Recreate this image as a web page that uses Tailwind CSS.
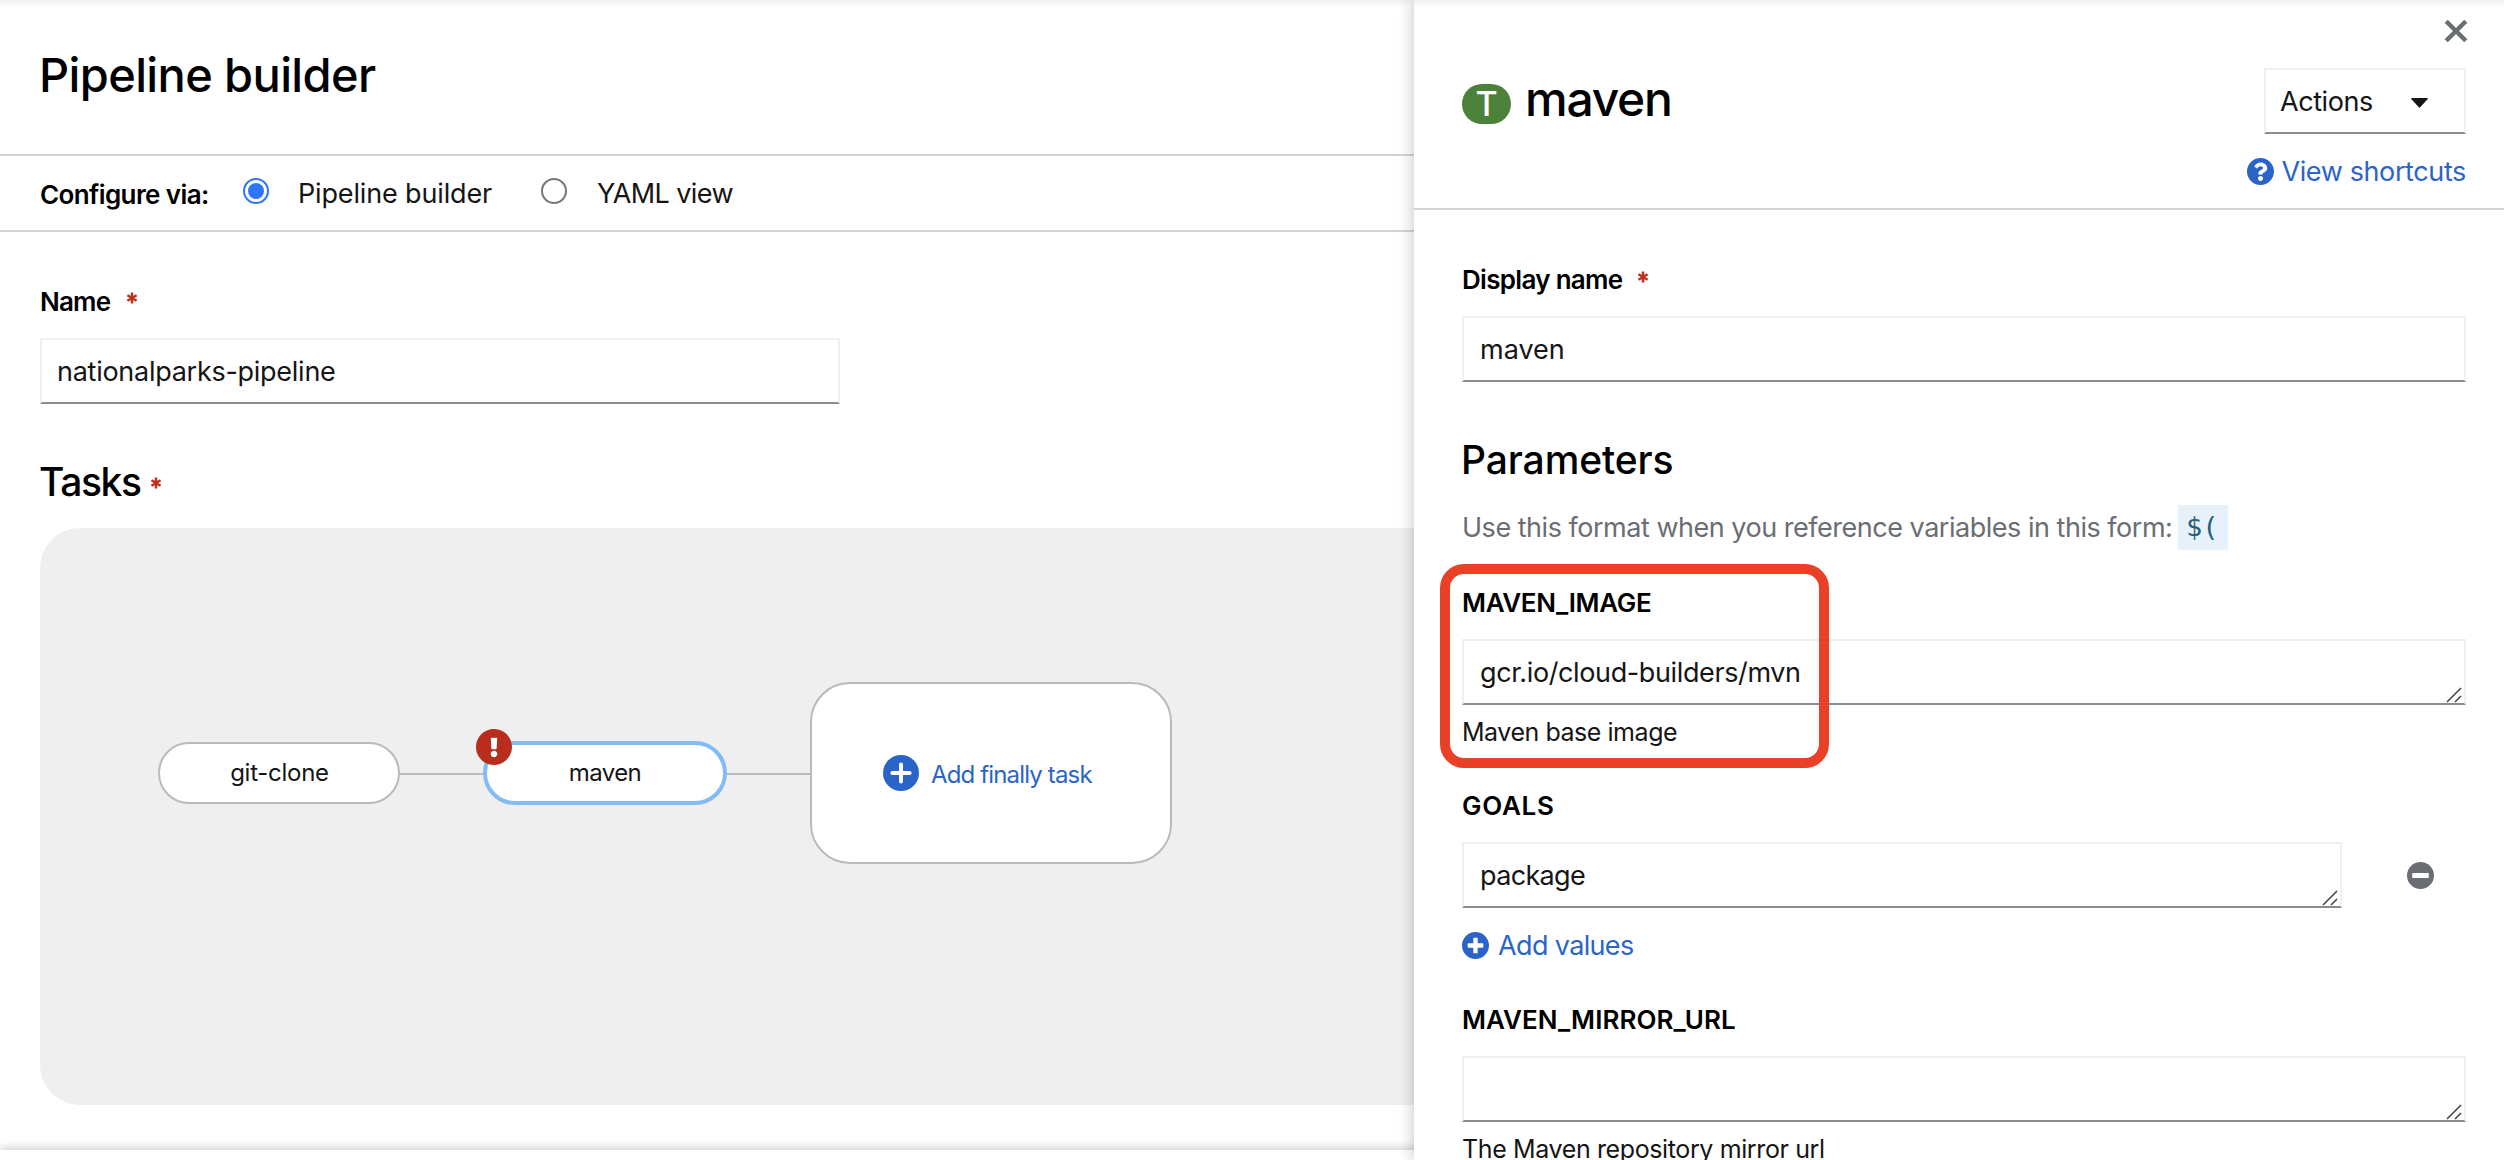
<!DOCTYPE html>
<html lang="en">
<head>
<meta charset="utf-8">
<title>Pipeline builder</title>
<script src="https://cdn.jsdelivr.net/npm/@tailwindcss/browser@4"></script>
</head>
<body class="relative h-[1160px] w-[2504px] overflow-hidden bg-white font-['Inter','Liberation_Sans',sans-serif] text-[27px] text-[#151515]">
<svg class="hidden">
  <symbol id="plus" viewBox="8 8 496 496"><path d="M256 8C119 8 8 119 8 256s111 248 248 248 248-111 248-248S393 8 256 8zm144 276c0 6.6-5.4 12-12 12h-92v92c0 6.6-5.4 12-12 12h-56c-6.6 0-12-5.4-12-12v-92h-92c-6.6 0-12-5.4-12-12v-56c0-6.6 5.4-12 12-12h92v-92c0-6.6 5.4-12 12-12h56c6.6 0 12 5.4 12 12v92h92c6.6 0 12 5.4 12 12v56z"/></symbol>
  <symbol id="grip" viewBox="0 0 16 16"><path d="M1 15L15 1M9 15l6-6" fill="none" stroke="#4a4a4a" stroke-width="1.6"/></symbol>
  <symbol id="star" viewBox="0 0 12 12"><path d="M6 .4v11.2M1.4 3.2l9.2 5.6M10.6 3.2L1.4 8.8" fill="none" stroke="#c02f1d" stroke-width="2.5"/></symbol>
</svg>

<!-- Builder page -->
<main class="flex h-full w-full flex-col">
  <header class="h-[156px] border-b-2 border-[#d2d2d2] pl-[39px] pt-[45px]">
    <h1 class="text-[47px] leading-[60px] font-medium tracking-[-0.63px] text-black">Pipeline builder</h1>
  </header>
  <div class="flex h-[76px] items-center border-b-2 border-[#d2d2d2] pl-10 whitespace-nowrap">
    <span class="w-[203px] pt-0.5 text-[26px] font-semibold tracking-[-0.6px] text-black">Configure via:</span>
    <span class="mb-1 flex size-[26px] items-center justify-center rounded-full border-2 border-[#2f74f5]"><span class="size-4 rounded-full bg-[#2f74f5]"></span></span>
    <span class="ml-[29px] w-[243px] pt-0.5 tracking-[-0.15px]">Pipeline builder</span>
    <span class="mb-1 size-[26px] rounded-full border-2 border-[#767676]"></span>
    <span class="ml-[30px] pt-0.5 tracking-[-0.6px]">YAML view</span>
  </div>
  <section class="flex grow flex-col pl-10">
    <label class="mt-[49px] flex h-[41px] items-center text-[26px] font-semibold tracking-[-0.8px] text-black"><span class="w-[86px]">Name</span><svg class="mb-[7px] size-3"><use href="#star"/></svg></label>
    <div class="mt-4 flex h-[66px] w-[800px] items-center border-2 border-[#f0f0f0] border-b-[#8a8d90] pt-0.5 pl-[15px] tracking-[-0.27px]">nationalparks-pipeline</div>
    <h2 class="mt-[54px] flex h-12 items-center text-[39px] font-medium tracking-[-1.39px] text-black"><span class="-ml-px w-[111px]">Tasks</span><svg class="mt-0.5 size-3"><use href="#star"/></svg></h2>
    <!-- Task graph -->
    <div class="relative mt-[22px] h-[577px] w-[1460px] rounded-[40px] bg-[#efefef] text-2xl">
      <div class="absolute left-[358px] top-[245px] h-0.5 w-[86px] bg-[#b8bbbe]"></div>
      <div class="absolute left-[684px] top-[245px] h-0.5 w-[88px] bg-[#b8bbbe]"></div>
      <div class="absolute left-[118px] top-[214px] flex h-[62px] w-[242px] items-center justify-center rounded-[31px] border-2 border-[#b8bbbe] bg-white pl-px tracking-[-0.26px]">git-clone</div>
      <div class="absolute left-[443px] top-[213px] flex h-16 w-[244px] items-center justify-center rounded-[32px] border-4 border-[#84bbf4] bg-white tracking-[-0.6px]">maven</div>
      <svg class="absolute left-[436px] top-[201px] size-9" viewBox="8 8 496 496"><circle cx="256" cy="256" r="190" fill="#fff"/><path fill="#b92d1d" d="M504 256c0 136.997-111.043 248-248 248S8 392.997 8 256C8 119.083 119.043 8 256 8s248 111.083 248 248zm-248 50c-25.405 0-46 20.595-46 46s20.595 46 46 46 46-20.595 46-46-20.595-46-46-46zm-43.673-165.346l7.418 136c.347 6.364 5.609 11.346 11.982 11.346h48.546c6.373 0 11.635-4.982 11.982-11.346l7.418-136c.375-6.874-5.098-12.654-11.982-12.654h-63.383c-6.884 0-12.356 5.78-11.981 12.654z"/></svg>
      <div class="absolute left-[770px] top-[154px] flex h-[182px] w-[362px] items-center rounded-[40px] border-2 border-[#b8bbbe] bg-white pl-[71px] text-[#2b64c8]">
        <svg class="size-9" viewBox="0 0 36 36"><circle cx="18" cy="18" r="18" fill="#2a64c9"/><path d="M18 9.4v17.2M9.4 18h17.2" stroke="#fff" stroke-width="4" stroke-linecap="round"/></svg>
        <span class="ml-3 mt-1 tracking-[-0.85px]">Add finally task</span>
      </div>
    </div>
  </section>
  <footer class="h-2.5 bg-white shadow-[0_-2px_10px_rgba(3,3,3,0.2)]"></footer>
</main>

<!-- Task details drawer, laid over the builder -->
<aside class="absolute inset-y-0 right-0 flex w-[1090px] flex-col bg-white shadow-[-2px_0_14px_rgba(3,3,3,0.2)]">
  <header class="flex h-[210px] justify-between border-b-2 border-[#d2d2d2] pl-12 pr-[38px]">
    <div class="mt-[68px] flex h-[62px] items-start">
      <span class="mt-4 flex h-10 w-[49px] items-center justify-center rounded-[20px] bg-[#4c8139] text-[34px] leading-10 font-medium text-white">T</span>
      <h1 class="ml-3.5 text-[48px] leading-[62px] font-medium tracking-[-1.25px] text-black">maven</h1>
    </div>
    <div class="flex flex-col items-end whitespace-nowrap">
      <svg class="-mr-0.5 mt-[19px] h-6 w-6" viewBox="0 0 24 24"><path d="M2.2 2.2l19.6 19.6M21.8 2.2L2.2 21.8" stroke="#6a6e73" stroke-width="4.4"/></svg>
      <div class="mt-[25px] flex h-[66px] w-[202px] items-center border-2 border-[#f0f0f0] border-b-[#8a8d90] pl-3.5 tracking-[-0.43px]"><span class="pt-0.5">Actions</span><svg class="ml-[38px] mt-1 h-[10px] w-[17px]" viewBox="0 0 17 10"><path d="M.8 0h15.4q1 .3.3 1.3L9.2 9.3q-.7.7-1.4 0L.5 1.3Q-.2.3.8 0z" fill="#151515"/></svg></div>
      <div class="mt-[19px] flex h-9 items-center text-[#2b64c8]">
        <svg class="size-[27px]" viewBox="8 8 496 496"><path fill="#2a64c9" d="M504 256c0 136.997-111.043 248-248 248S8 392.997 8 256C8 119.083 119.043 8 256 8s248 111.083 248 248zM262.655 90c-54.497 0-89.255 22.957-116.549 63.758-3.536 5.286-2.353 12.415 2.715 16.258l34.699 26.31c5.205 3.947 12.621 3.008 16.665-2.122 17.864-22.658 30.113-35.797 57.303-35.797 20.429 0 45.698 13.148 45.698 32.958 0 14.976-12.363 22.667-32.534 33.976C247.128 238.528 216 254.941 216 296v4c0 6.627 5.373 12 12 12h56c6.627 0 12-5.373 12-12v-1.333c0-28.462 83.186-29.647 83.186-106.667 0-58.002-60.165-102-116.531-102zM256 338c-25.365 0-46 20.635-46 46 0 25.364 20.635 46 46 46s46-20.636 46-46c0-25.365-20.635-46-46-46z"/></svg>
        <span class="ml-[7px] pt-0.5 tracking-[-0.38px]">View shortcuts</span>
      </div>
    </div>
  </header>
  <div class="flex flex-col pl-12 pr-[38px] whitespace-nowrap">
    <label class="mt-[50px] flex h-10 items-center text-[26px] font-semibold tracking-[-0.7px] text-black"><span class="w-[175px] pb-px">Display name</span><svg class="mb-[7px] size-3"><use href="#star"/></svg></label>
    <div class="mt-4 flex h-[66px] items-center border-2 border-[#f0f0f0] border-b-[#8a8d90] pt-0.5 pl-4">maven</div>
    <h2 class="mt-[54px] h-12 -ml-px text-[39px] leading-[48px] font-medium tracking-[-0.1px] text-black">Parameters</h2>
    <p class="mt-[21px] flex h-[45px] items-center text-[#6a6e73]"><span class="w-[716px] pt-0.5 tracking-[-0.48px]">Use this format when you reference variables in this form:</span><code class="h-[45px] w-[50px] bg-[#e7f1fa] pl-2 font-['DejaVu_Sans_Mono',monospace] text-[27px] leading-[44px] text-[#25617a]">$(</code></p>

    <label class="mt-[33px] h-10 text-[26px] leading-10 font-semibold tracking-[-0.33px] text-black">MAVEN_IMAGE</label>
    <div class="relative mt-4 flex h-[66px] items-center border-2 border-[#f0f0f0] border-b-[#8a8d90] pt-0.5 pl-4 tracking-[-0.38px]">gcr.io/cloud-builders/mvn<svg class="absolute bottom-0 right-0.5 size-4"><use href="#grip"/></svg></div>
    <p class="mt-2 h-[38px] text-[25px] leading-[38px] tracking-[-0.46px]">Maven base image</p>

    <label class="mt-[35px] h-10 text-[26px] leading-10 font-semibold tracking-[0.74px] text-black">GOALS</label>
    <div class="mt-4 flex items-center">
      <div class="relative flex h-[66px] w-[880px] items-center border-2 border-[#f0f0f0] border-b-[#8a8d90] pt-0.5 pl-4 tracking-[-0.65px]">package<svg class="absolute bottom-0 right-0.5 size-4"><use href="#grip"/></svg></div>
      <svg class="ml-[65px] size-[27px]" viewBox="0 0 27 27"><circle cx="13.5" cy="13.5" r="13.5" fill="#6a6e73"/><rect x="5.2" y="11" width="16.6" height="5" rx=".8" fill="#fff"/></svg>
    </div>
    <div class="mt-[19px] flex h-9 items-center text-[#2b64c8]"><svg class="size-[27px] fill-[#2a64c9]"><use href="#plus"/></svg><span class="ml-[9px] pt-0.5 tracking-[-0.64px]">Add values</span></div>

    <label class="mt-[37px] h-10 text-[26px] leading-10 font-semibold tracking-[0.06px] text-black">MAVEN_MIRROR_URL</label>
    <div class="relative mt-4 h-[66px] border-2 border-[#f0f0f0] border-b-[#8a8d90]"><svg class="absolute bottom-0 right-0.5 size-4"><use href="#grip"/></svg></div>
    <p class="mt-2 h-[30px] text-[25px] leading-[38px] tracking-[-0.38px]">The Maven repository mirror url</p>
  </div>
  <!-- Highlight around the image parameter -->
  <div class="absolute left-[26px] top-[564px] h-[204px] w-[389px] rounded-3xl border-10 border-[#ea4025]"></div>
</aside>

<!-- Shadow cast by the masthead -->
<div class="absolute inset-x-0 top-0 h-2 bg-linear-to-b from-black/6 to-transparent"></div>
</body>
</html>
